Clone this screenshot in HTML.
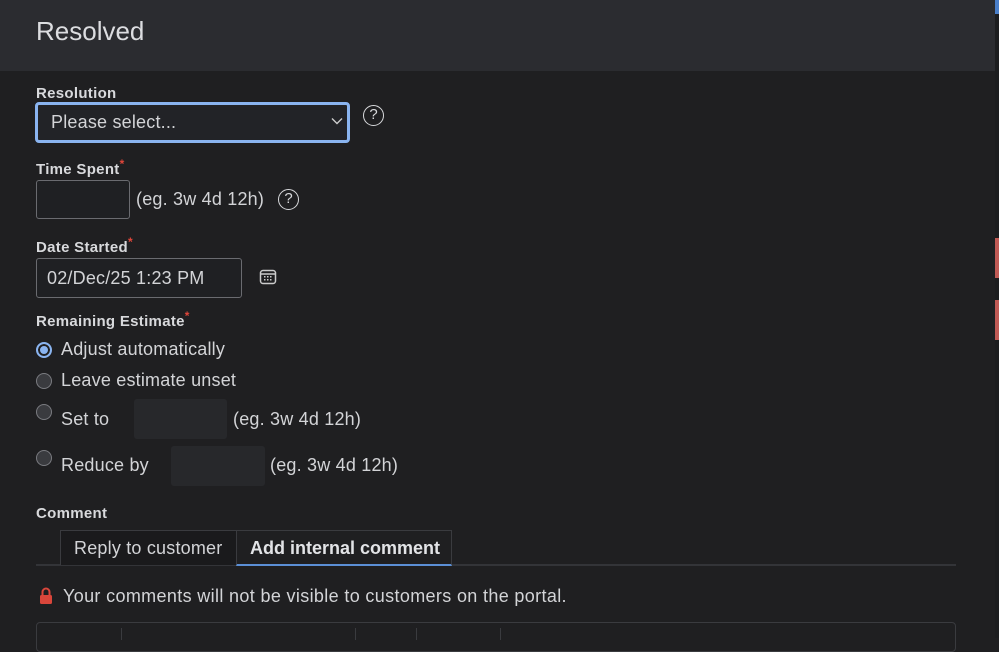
<!DOCTYPE html>
<html><head><style>
*{margin:0;padding:0;box-sizing:border-box}
body{width:999px;height:638px;overflow:hidden;background:#1f1f21;font-family:"Liberation Sans",sans-serif;color:#dcdde0;position:relative}
.a{position:absolute;white-space:nowrap}
.lbl{font-weight:bold;font-size:15px;letter-spacing:0.3px;color:#d8d9dc}
.t{font-size:18px;letter-spacing:0.2px;color:#d3d4d7}
.star{color:#e0463a;font-size:12px;position:relative;top:-6px}
.radio{position:absolute;width:16px;height:16px;border-radius:50%;border:1.5px solid #7a7b80;background:#3a3b3f}
.q{position:absolute;width:21px;height:21px;border:1.8px solid #d8d9dc;border-radius:50%;font-size:15px;text-align:center;line-height:18px;color:#d8d9dc}
</style></head><body>
<div class="a" style="left:0;top:0;width:995px;height:71px;background:#2b2c30"></div>
<div class="a" style="left:995px;top:0;width:4px;height:638px;background:#1c1d1f"></div>
<div class="a" style="left:995px;top:0;width:4px;height:14px;background:#4a7fc9"></div>
<div class="a" style="left:995px;top:238px;width:4px;height:40px;background:#c05a55"></div>
<div class="a" style="left:995px;top:300px;width:4px;height:40px;background:#c05a55"></div>
<div class="a" style="left:36px;top:16px;font-size:26px;color:#dcdde0">Resolved</div>

<div class="a lbl" style="left:36px;top:85px">Resolution</div>
<div class="a" style="left:35px;top:102px;width:315px;height:41px;border:3px solid #8ab4f0;border-radius:4px;background:#222327"></div>
<div class="a t" style="left:51px;top:112px">Please select...</div>
<svg class="a" style="left:331px;top:117px" width="12" height="8"><path d="M1 1.5L6 6.5L11 1.5" stroke="#ccc" stroke-width="1.4" fill="none"/></svg>
<div class="q" style="left:363px;top:105px">?</div>

<div class="a lbl" style="left:36px;top:161px">Time Spent<span class="star">*</span></div>
<div class="a" style="left:36px;top:180px;width:94px;height:39px;border:1px solid #6a6b70;border-radius:3px;background:#1f2023"></div>
<div class="a t" style="left:136px;top:189px">(eg. 3w 4d 12h)</div>
<div class="q" style="left:278px;top:189px">?</div>

<div class="a lbl" style="left:36px;top:239px">Date Started<span class="star">*</span></div>
<div class="a" style="left:36px;top:258px;width:206px;height:40px;border:1px solid #6a6b70;border-radius:3px;background:#1f2023"></div>
<div class="a t" style="left:47px;top:268px">02/Dec/25 1:23 PM</div>
<svg class="a" style="left:259px;top:268px" width="18" height="18"><rect x="1.5" y="2.5" width="15" height="13" rx="2.5" stroke="#ccc" stroke-width="1.5" fill="none"/><line x1="2" y1="6" x2="16" y2="6" stroke="#ccc" stroke-width="1.5"/><g fill="#ccc"><rect x="5" y="8" width="1.5" height="1.5"/><rect x="8" y="8" width="1.5" height="1.5"/><rect x="11" y="8" width="1.5" height="1.5"/><rect x="5" y="11" width="1.5" height="1.5"/><rect x="8" y="11" width="1.5" height="1.5"/><rect x="11" y="11" width="1.5" height="1.5"/></g></svg>

<div class="a lbl" style="left:36px;top:313px">Remaining Estimate<span class="star">*</span></div>
<div class="radio" style="left:36px;top:342px;border:2px solid #8ab4f0;background:#8ab4f0;box-shadow:inset 0 0 0 2px #1f1f21"></div>
<div class="a t" style="left:61px;top:339px">Adjust automatically</div>
<div class="radio" style="left:36px;top:373px"></div>
<div class="a t" style="left:61px;top:370px">Leave estimate unset</div>
<div class="radio" style="left:36px;top:404px"></div>
<div class="a t" style="left:61px;top:409px">Set to</div>
<div class="a" style="left:134px;top:399px;width:93px;height:40px;background:#27282b;border-radius:3px"></div>
<div class="a t" style="left:233px;top:409px">(eg. 3w 4d 12h)</div>
<div class="radio" style="left:36px;top:450px"></div>
<div class="a t" style="left:61px;top:455px">Reduce by</div>
<div class="a" style="left:171px;top:446px;width:94px;height:40px;background:#27282b;border-radius:3px"></div>
<div class="a t" style="left:270px;top:455px">(eg. 3w 4d 12h)</div>

<div class="a lbl" style="left:36px;top:505px">Comment</div>
<div class="a" style="left:36px;top:564px;width:920px;height:2px;background:#333438"></div>
<div class="a" style="left:60px;top:530px;width:177px;height:35px;border:1px solid #3a3b3f;border-bottom:none;background:#1a1a1c"></div>
<div class="a t" style="left:74px;top:538px">Reply to customer</div>
<div class="a" style="left:236px;top:530px;width:216px;height:36px;border:1px solid #3a3b3f;border-bottom:2px solid #5b8fd6;background:#1f1f21"></div>
<div class="a t" style="left:250px;top:538px;font-weight:bold;letter-spacing:0;color:#e2e3e6">Add internal comment</div>

<svg class="a" style="left:39px;top:587px" width="14" height="18"><path d="M3.5 8V5a3.5 3.5 0 0 1 7 0v3" stroke="#d9463b" stroke-width="2" fill="none"/><rect x="1" y="8" width="12" height="9" rx="1.5" fill="#d9463b"/></svg>
<div class="a t" style="left:63px;top:586px;letter-spacing:0.35px">Your comments will not be visible to customers on the portal.</div>

<div class="a" style="left:36px;top:622px;width:920px;height:30px;border:1px solid #3a3b3f;border-radius:4px"></div>
<div class="a" style="left:121px;top:628px;width:1px;height:12px;background:#3a3b3f"></div>
<div class="a" style="left:355px;top:628px;width:1px;height:12px;background:#3a3b3f"></div>
<div class="a" style="left:416px;top:628px;width:1px;height:12px;background:#3a3b3f"></div>
<div class="a" style="left:500px;top:628px;width:1px;height:12px;background:#3a3b3f"></div>
</body></html>
